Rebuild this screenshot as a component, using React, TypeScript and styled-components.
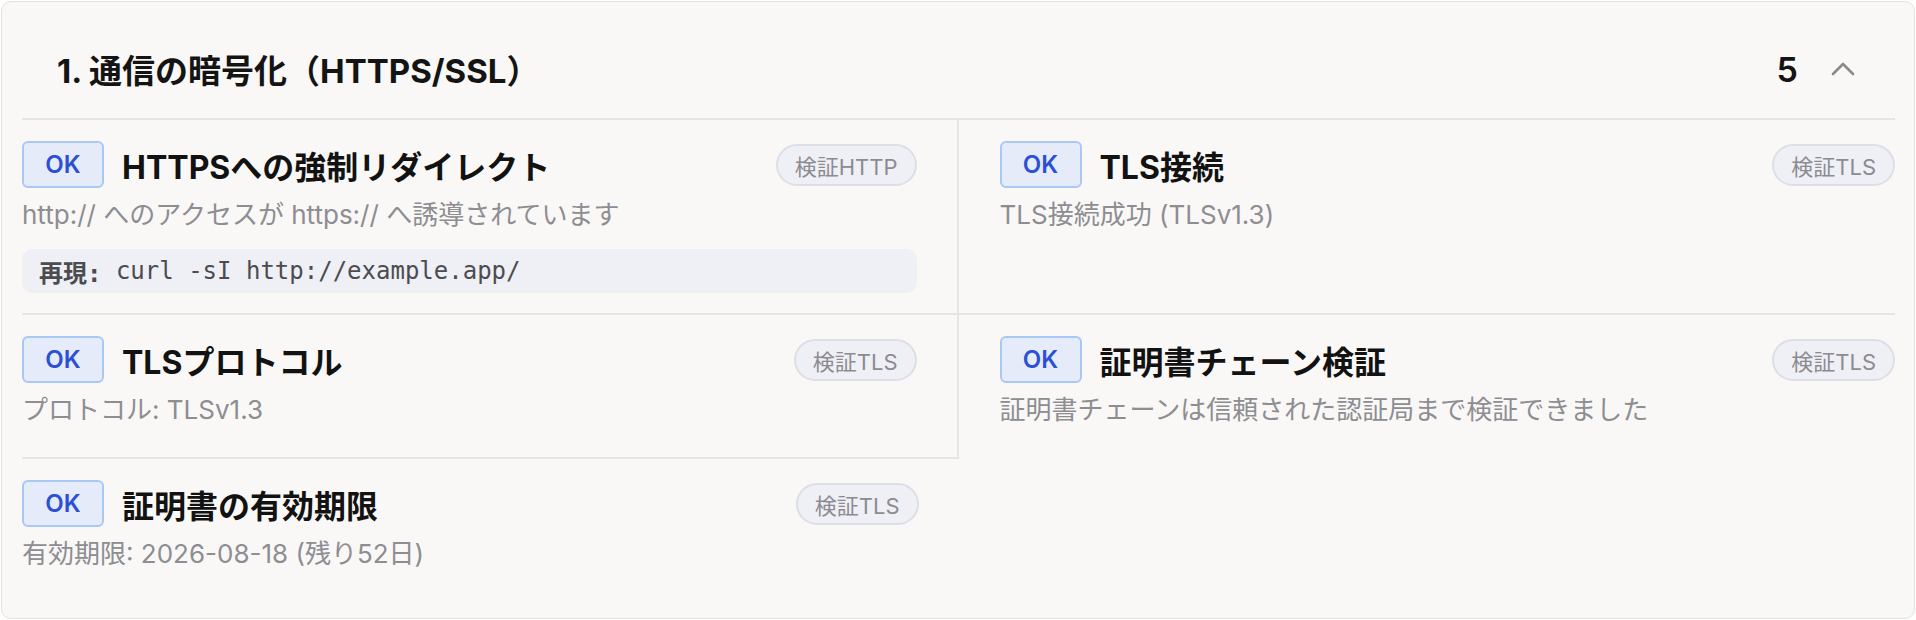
import React from 'react';
import styled, { createGlobalStyle } from 'styled-components';

const GlobalStyle = createGlobalStyle`
  html, body {
    margin: 0;
    padding: 0;
    background: #ffffff;
  }
  body {
    font-family: 'Inter', 'Noto Sans CJK JP', sans-serif;
  }
`;

const Card = styled.section`
  margin: 1px;
  border: 1px solid #e3e2de;
  border-radius: 10px;
  background: #f9f8f6;
  padding: 0 19px 17px 20px;
`;

const Header = styled.div`
  box-sizing: border-box;
  height: 118px;
  display: flex;
  align-items: center;
  padding: 18px 40px 0 35px;
  border-bottom: 2px solid #e6e5e2;
`;

const HeaderTitle = styled.h2`
  margin: 0;
  flex: 1;
  font-family: 'Inter', 'Noto Sans CJK JP', sans-serif;
  font-size: 33px;
  font-weight: 700;
  color: #141414;
`;

const Count = styled.span`
  font-family: 'Inter', sans-serif;
  font-size: 34px;
  font-weight: 600;
  color: #141414;
  margin-right: 33px;
`;

const Chevron = styled.svg`
  width: 24px;
  height: 16px;
`;

const Grid = styled.div`
  display: grid;
  grid-template-columns: 1fr 1fr;
`;

const Item = styled.div<{ $side: 'left' | 'right'; $divider: boolean; $last: boolean }>`
  padding: ${(p) => (p.$side === 'left' ? '21px 40px 20px 0' : '21px 0 20px 41px')};
  border-right: ${(p) => (p.$divider ? '2px solid #e6e5e2' : 'none')};
  border-bottom: ${(p) => (p.$last ? 'none' : '2px solid #e6e5e2')};
  display: flex;
  flex-direction: column;
`;

const ItemHead = styled.div`
  display: flex;
  align-items: center;
  gap: 18px;
`;

const Badge = styled.span`
  box-sizing: border-box;
  width: 82px;
  height: 47px;
  display: inline-flex;
  align-items: center;
  justify-content: center;
  border: 2px solid #a8c8f6;
  border-radius: 6px;
  background: #e6ebf9;
  color: #2b50d5;
  font-family: 'Inter', sans-serif;
  font-size: 24px;
  font-weight: 600;
  flex-shrink: 0;
`;

const ItemTitle = styled.h3`
  margin: 0;
  flex: 1;
  font-family: 'Inter', 'Noto Sans CJK JP', sans-serif;
  font-size: 32px;
  font-weight: 700;
  color: #121212;
`;

const Tag = styled.span`
  box-sizing: border-box;
  height: 42px;
  display: inline-flex;
  align-items: center;
  padding: 0 17px;
  border: 2px solid #dddfe6;
  border-radius: 999px;
  background: #eff0f5;
  color: #8b8b91;
  font-family: 'Inter', 'Noto Sans CJK JP', sans-serif;
  font-size: 22px;
  flex-shrink: 0;
`;

const Desc = styled.p`
  margin: 10px 0;
  font-family: 'Inter', 'Noto Sans CJK JP', sans-serif;
  font-size: 26px;
  line-height: 34px;
  color: #8d8d92;
`;

const Code = styled.div`
  margin-top: 7px;
  height: 44px;
  display: flex;
  align-items: center;
  padding: 0 17px;
  border-radius: 10px;
  background: #eff0f5;
  font-family: 'DejaVu Sans Mono', 'Noto Sans CJK JP', monospace;
  font-size: 24px;
  color: #4b4b50;
  white-space: pre;
`;

const CodeLabel = styled.span`
  font-weight: 600;
`;

type Check = {
  title: string;
  tag: string;
  desc: string;
  code?: string;
};

const checks: Check[] = [
  {
    title: 'HTTPSへの強制リダイレクト',
    tag: '検証HTTP',
    desc: 'http:// へのアクセスが https:// へ誘導されています',
    code: 'curl -sI http://example.app/',
  },
  { title: 'TLS接続', tag: '検証TLS', desc: 'TLS接続成功 (TLSv1.3)' },
  { title: 'TLSプロトコル', tag: '検証TLS', desc: 'プロトコル: TLSv1.3' },
  {
    title: '証明書チェーン検証',
    tag: '検証TLS',
    desc: '証明書チェーンは信頼された認証局まで検証できました',
  },
  { title: '証明書の有効期限', tag: '検証TLS', desc: '有効期限: 2026-08-18 (残り52日)' },
];

const App: React.FC = () => {
  const total = checks.length;

  return (
    <>
      <GlobalStyle />
      <Card>
        <Header>
          <HeaderTitle>1. 通信の暗号化（HTTPS/SSL）</HeaderTitle>
          <Count>{total}</Count>
          <Chevron viewBox="0 0 24 16" fill="none">
            <polyline
              points="2,13 12,3 22,13"
              stroke="#8a8a8a"
              strokeWidth="2.6"
              strokeLinecap="round"
              strokeLinejoin="round"
            />
          </Chevron>
        </Header>
        <Grid>
          {checks.map((c, i) => {
            const side = i % 2 === 0 ? 'left' : 'right';
            return (
              <Item
                key={c.title}
                $side={side}
                $divider={side === 'left' && i < total - 1}
                $last={i >= total - 2}
              >
                <ItemHead>
                  <Badge>OK</Badge>
                  <ItemTitle>{c.title}</ItemTitle>
                  <Tag>{c.tag}</Tag>
                </ItemHead>
                <Desc>{c.desc}</Desc>
                {c.code && (
                  <Code>
                    <CodeLabel>再現:</CodeLabel>
                    {' ' + c.code}
                  </Code>
                )}
              </Item>
            );
          })}
        </Grid>
      </Card>
    </>
  );
};

export default App;
